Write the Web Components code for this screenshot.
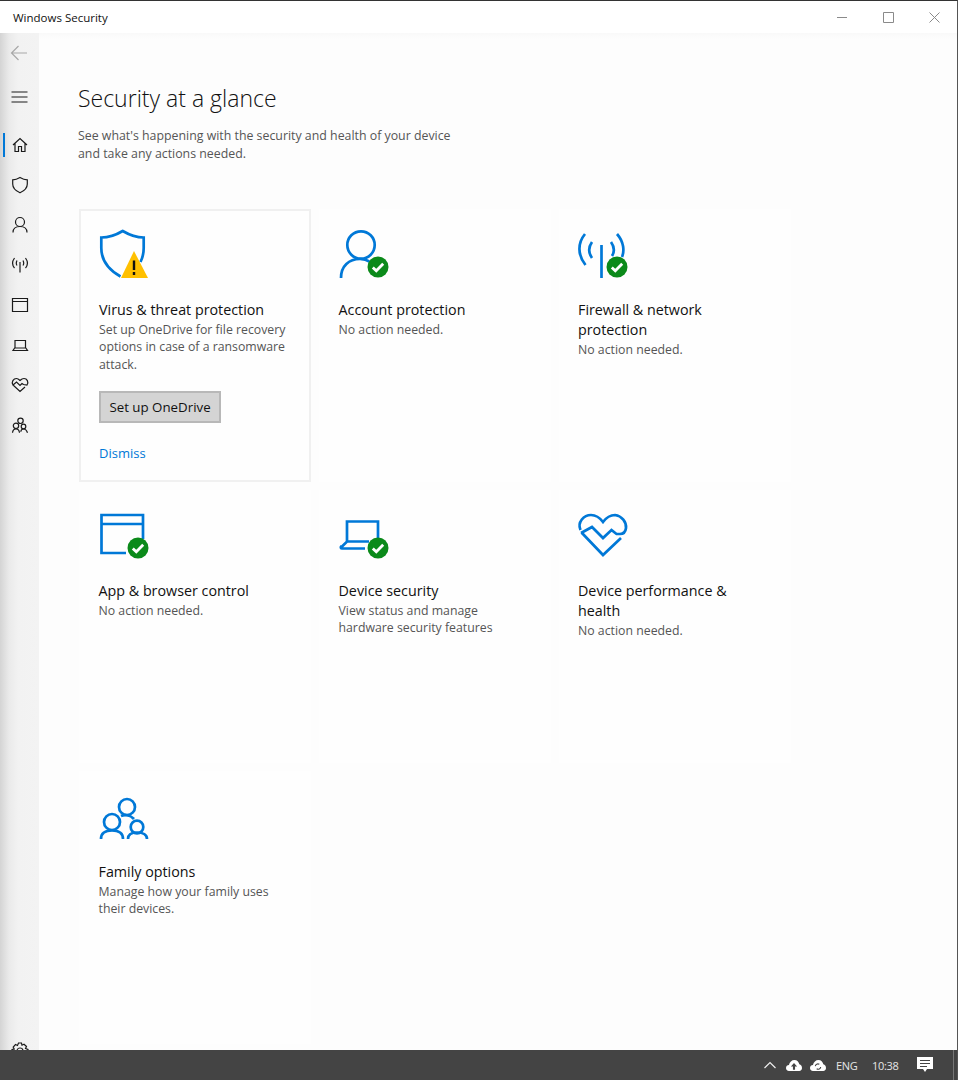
<!DOCTYPE html>
<html>
<head>
<meta charset="utf-8">
<title>Windows Security</title>
<style>
html, body { margin: 0; padding: 0; height: 100%; background: #fff; }
body { font-family: "Open Sans", "Liberation Sans", sans-serif; overflow: hidden; }
</style>
</head>
<body>
<sec-app>
    <sec-titlebar slot="top">Windows Security</sec-titlebar>
    <sec-nav slot="nav"></sec-nav>
    <sec-page heading="Security at a glance">
        <span slot="intro">See what's happening with the security and health of your device<br>and take any actions needed.</span>
        <sec-card icon="shield" alert>
            <span slot="heading">Virus &amp; threat protection</span>
            Set up OneDrive for file recovery options in case of a ransomware attack.
            <sec-button slot="actions">Set up OneDrive</sec-button>
            <sec-link slot="actions">Dismiss</sec-link>
        </sec-card>
        <sec-card icon="account" ok>
            <span slot="heading">Account protection</span>
            No action needed.
        </sec-card>
        <sec-card icon="wifi" ok>
            <span slot="heading">Firewall &amp; network protection</span>
            No action needed.
        </sec-card>
        <sec-card icon="browser" ok>
            <span slot="heading">App &amp; browser control</span>
            No action needed.
        </sec-card>
        <sec-card icon="laptop" ok>
            <span slot="heading">Device security</span>
            View status and manage hardware security features
        </sec-card>
        <sec-card icon="heart">
            <span slot="heading">Device performance &amp; health</span>
            No action needed.
        </sec-card>
        <sec-card icon="family">
            <span slot="heading">Family options</span>
            Manage how your family uses their devices.
        </sec-card>
    </sec-page>
    <sec-taskbar slot="bottom"></sec-taskbar>
</sec-app>

<script>
// big card icons, 50 box, origin is the top left of the icon slot
const CARD_ICONS = {
    shield: `<path d="M21.5 47.5C10 41 2.3 31 2.3 19V8.5C9.5 8.5 16.5 6.3 23.7 2C31 6.3 38 8.5 44.7 8.5V19C44.7 25 43.5 29 41.5 33"/>
             <path d="M35 22L49 49H22Z" fill="#ffc000" stroke="none"/>
             <path d="M35 31.500V41M35 43V46" stroke="#111" stroke-width="2.400"/>`,
    account: `<circle cx="22" cy="16" r="13.700"/><path d="M2 49C2 37 10 30 21 30C25 30 28 31 31 33"/>`,
    wifi: `<path d="M23.500 16V49"/>
           <path d="M7 5C-0.500 14 -0.500 26 7.500 36M39 5C46 13 46.500 22 44 28"/>
           <path d="M14 13C10.500 18 10.500 24 14 29M33 13C36.500 18 36.500 23 34 27"/>`,
    browser: `<path d="M44 29V5H2.500V43H27M2.500 14H44"/>`,
    laptop: `<path d="M8 31V11.500H39V29M1.500 38L8 31.500H30M26 38.500H3C2 38.500 1 37.500 2.500 36"/>`,
    heart: `<path d="M2.500 20C-1 12 6 5 13 5C18 5 22 8 25 12C28 8 32 5 37 5C44 6 48.500 12 48 18C47.500 22 45 24 42 24H38.500L33.500 20L25 28L14 17L3 23"/>
            <path d="M3.500 22.500L25 45L43 28"/>`,
    family: `<circle cx="28" cy="16" r="8"/><circle cx="13" cy="31" r="8"/><circle cx="38" cy="36" r="6.300"/>
             <path d="M2 48C2 42 6 39.500 13 39.500C20 39.500 24 42 24 48M29 48C29 44 32 41.500 38 41.500C44 41.500 48 44 48 48M22 25C25 23.500 31 23.500 35 28"/>`
}

// small rail icons on a 20 box
const NAV_ICONS = {
    home: `<path d="M3 10L10 3.500L17 10M5 8.500V16.500H8.500V11.500H11.500V16.500H15V8.500"/>`,
    shield: `<path d="M10 2.500C7.500 4 5 4.800 2.700 4.800V9C2.700 13 5.500 15.800 10 17.800C14.500 15.800 17.300 13 17.300 9V4.800C15 4.800 12.500 4 10 2.500Z"/>`,
    person: `<circle cx="10" cy="7" r="4.500"/><path d="M3 17.500C3 13.500 6 11.500 10 11.500C14 11.500 17 13.500 17 17.500"/>`,
    wifi: `<path d="M10 7V17.500M4.500 3C2 6.500 2 10 4.500 13M15.500 3C18 6.500 18 10 15.500 13M7 5.500C6 7.500 6 9 7 10.500M13 5.500C14 7.500 14 9 13 10.500"/>`,
    browser: `<path d="M2.500 3.500H17.500V16.500H2.500ZM2.500 6.500H17.500"/>`,
    laptop: `<path d="M5 5.500H15.500V13H5ZM5 12.500L3 15.500H17.500L15.500 12.500"/>`,
    heart: `<path d="M3 10C1 7 3.500 3.500 6.500 3.500C8 3.500 9 4.500 10 5.500C11 4.500 12.500 3.500 14 3.500C17 3.500 19 7 17 10L13.500 9.500L12 8.500L10 10.500L6.500 7L3 10L10 16.500L15 12"/>`,
    family: `<circle cx="10.500" cy="5.800" r="2.700"/><circle cx="6" cy="10.800" r="2.700"/><circle cx="13.500" cy="11.500" r="2.300"/>
             <path d="M2.500 17.800C2.800 15 4 13.800 6 13.800C8 13.800 9.200 15 9.500 17.800M10.800 16.800C11 15 12 14 13.500 14C15.500 14 16.700 15.500 17.500 17.800"/>`,
    gear: `<circle cx="10" cy="10" r="3"/><path d="M8.500 2H11.500L12 4.200L14 3.300L16.500 5.500L15.500 7.500L18 8.500V11.500L15.800 12L16.800 14L14.500 16.500L12.500 15.500L11.500 18H8.500L8 15.800L6 16.800L3.500 14.500L4.500 12.500L2 11.500V8.500L4.200 8L3.200 6L5.500 3.500L7.500 4.500Z"/>`
}

class SecApp extends HTMLElement {
    constructor() {
        super()
        this.attachShadow({ mode: 'open' })
        this.shadowRoot.innerHTML = `<style>
            :host { display: flex; flex-direction: column; height: 1080px; box-sizing: border-box; border-top: 1px solid #333; border-right: 1px solid #555; }
            section { flex: 1; display: flex; min-height: 0; }
        </style>
        <slot name="top"></slot>
        <section><slot name="nav"></slot><slot></slot></section>
        <slot name="bottom"></slot>`
    }
}

class SecTitlebar extends HTMLElement {
    constructor() {
        super()
        this.attachShadow({ mode: 'open' })
        this.shadowRoot.innerHTML = `<style>
            :host { display: flex; align-items: center; height: 32px; background: #fff; color: #111; font-size: 11.5px; padding-left: 13px; }
            .title { flex: 1; }
            svg { width: 46px; height: 32px; fill: none; stroke: #8a8a8a; stroke-width: 1; display: block; }
        </style>
        <div class="title"><slot></slot></div>
        <svg viewBox="0 0 46 32"><path d="M18 16.500H28"/></svg>
        <svg viewBox="0 0 46 32"><path d="M18.500 11.500H28.500V21.500H18.500Z"/></svg>
        <svg viewBox="0 0 46 32"><path d="M18.500 11.500L28.500 21.500M28.500 11.500L18.500 21.500"/></svg>`
    }
}

class SecNav extends HTMLElement {
    constructor() {
        super()
        this.attachShadow({ mode: 'open' })
        const row = (name) => `<div class="row${name === 'home' ? ' active' : ''}"><svg viewBox="0 0 20 20">${NAV_ICONS[name]}</svg></div>`
        this.shadowRoot.innerHTML = `<style>
            :host { display: flex; flex-direction: column; flex: none; width: 39px; overflow: hidden; background: linear-gradient(90deg, #d4d4d4 0, #eaeaea 9px, #f2f2f2 18px, #f3f3f3 100%); }
            .row { flex: none; height: 40px; display: flex; align-items: center; justify-content: center; position: relative; }
            .row svg { width: 20px; height: 20px; fill: none; stroke: #1a1a1a; stroke-width: 1.200; }
            .back svg { stroke: #a8a8a8; }
            .menu { margin: 4px 0 8px; }
            .active::before { content: ""; position: absolute; left: 3px; top: 8px; width: 2px; height: 24px; background: #0078d7; }
            .gear { margin-top: auto; margin-bottom: -21px; }
        </style>
        <div class="row back"><svg viewBox="0 0 20 20"><path d="M17 10H1.500M8.500 3L1.500 10L8.500 17"/></svg></div>
        <div class="row menu"><svg viewBox="0 0 20 20"><path d="M1.500 5H17.500M1.500 10H17.500M1.500 15H17.500"/></svg></div>
        ${['home', 'shield', 'person', 'wifi', 'browser', 'laptop', 'heart', 'family'].map(row).join('')}
        <div class="row gear"><svg viewBox="0 0 20 20">${NAV_ICONS.gear}</svg></div>`
    }
}

class SecPage extends HTMLElement {
    constructor() {
        super()
        this.attachShadow({ mode: 'open' })
        this.shadowRoot.innerHTML = `<style>
            :host { display: block; flex: 1; min-width: 0; overflow: hidden; background: linear-gradient(180deg, #f9f9f9 0, #fdfdfd 6px); padding: 49px 0 0 39px; }
            h1 { margin: 0; font-size: 23px; line-height: 32px; font-weight: 300; color: #111; }
            p { margin: 13px 0 46px; font-size: 12.350px; line-height: 18px; color: #555; }
            .grid { display: grid; grid-template-columns: 232px 231.500px 232px; grid-auto-rows: 273px; gap: 8px; margin-left: 1px; }
        </style>
        <h1>${this.getAttribute('heading')}</h1>
        <p><slot name="intro"></slot></p>
        <div class="grid"><slot></slot></div>`
    }
}

class SecCard extends HTMLElement {
    constructor() {
        super()
        this.attachShadow({ mode: 'open' })
        const ok = this.hasAttribute('ok')
        const badge = ok ? `<svg class="badge" viewBox="0 0 22 22"><circle cx="11" cy="11" r="10.500" fill="#0b8a1a"/><path d="M5.800 11.500L9.300 14.800L16.200 7.800" fill="none" stroke="#fff" stroke-width="2.800"/></svg>` : ''
        this.shadowRoot.innerHTML = `<style>
            :host { display: block; box-sizing: border-box; padding: 20px 22px 0 19.500px; background: #fefefe; }
            :host([alert]) { box-shadow: inset 0 0 0 2px #f0f0f0; padding-left: 20px; }
            .icon { position: relative; width: 50px; height: 50px; margin-bottom: 21px; }
            .icon > svg:first-child { display: block; width: 50px; height: 50px; overflow: visible; fill: none; stroke: #0078d7; stroke-width: 2.700; }
            .badge { position: absolute; left: 28px; top: 27px; width: 22px; height: 22px; }
            .heading { font-size: 14.300px; line-height: 20px; color: #111; }
            .text { margin-top: 0.500px; font-size: 12.300px; line-height: 17.500px; color: #555; }
        </style>
        <div class="icon"><svg viewBox="0 0 50 50">${CARD_ICONS[this.getAttribute('icon')]}</svg>${badge}</div>
        <div class="heading"><slot name="heading"></slot></div>
        <div class="text"><slot></slot></div>
        <slot name="actions"></slot>`
    }
}

class SecButton extends HTMLElement {
    constructor() {
        super()
        this.attachShadow({ mode: 'open' })
        this.shadowRoot.innerHTML = `<style>
            :host { display: flex; align-items: center; justify-content: center; box-sizing: border-box; width: 122px; height: 32px; margin-top: 18px; background: #d4d4d4; border: 2px solid #b8b8b8; color: #111; font-size: 13.300px; }
        </style><slot></slot>`
    }
}

class SecLink extends HTMLElement {
    constructor() {
        super()
        this.attachShadow({ mode: 'open' })
        this.shadowRoot.innerHTML = `<style>
            :host { display: block; margin-top: 20.500px; color: #0078d7; font-size: 13px; line-height: 18px; }
        </style><slot></slot>`
    }
}

class SecTaskbar extends HTMLElement {
    constructor() {
        super()
        this.attachShadow({ mode: 'open' })
        this.shadowRoot.innerHTML = `<style>
            :host { display: flex; flex: none; align-items: center; justify-content: flex-end; height: 30px; background: #444; color: #e6e6e6; font-size: 11px; padding-right: 3px; }
            svg { display: block; flex: none; }
            .chev { width: 14px; height: 14px; margin-right: 9px; fill: none; stroke: #eee; stroke-width: 1.200; }
            .cloud { width: 16px; height: 12.500px; margin-right: 8px; fill: #fff; }
            .eng { width: 22px; margin: 0 14px 0 2px; white-space: nowrap; letter-spacing: -0.300px; }
            .time { width: 27px; margin-right: 17px; white-space: nowrap; letter-spacing: -0.300px; }
            .note { width: 18px; height: 18px; fill: #fff; margin-right: 19px; }
            .edge { width: 1px; height: 30px; background: #777; }
        </style>
        <svg class="chev" viewBox="0 0 14 14"><path d="M1.500 10L7 4.500L12.500 10"/></svg>
        <svg class="cloud" viewBox="0 0 18 14"><path d="M4 13.500C1.500 13.500 0 12 0 10C0 8 1.500 6.800 3.300 6.800C4 3.300 6.500 1 9.500 1C12.500 1 14.500 3 15 6C16.800 6.300 18 8 18 10C18 12 16.500 13.500 14.500 13.500Z"/><path d="M9 4.500L5.500 8.300H7.800V12H10.200V8.300H12.500Z" fill="#444"/></svg>
        <svg class="cloud" viewBox="0 0 18 14"><path d="M4 13.500C1.500 13.500 0 12 0 10C0 8 1.500 6.800 3.300 6.800C4 3.300 6.500 1 9.500 1C12.500 1 14.500 3 15 6C16.800 6.300 18 8 18 10C18 12 16.500 13.500 14.500 13.500Z"/><path d="M6 8C6.200 6 8.500 4.800 10.500 6M12 9C11.800 11 9.500 12.200 7.500 11" fill="none" stroke="#444" stroke-width="1.300"/></svg>
        <span class="eng">ENG</span>
        <span class="time">10:38</span>
        <svg class="note" viewBox="0 0 18 18"><path d="M1 1H17V13H11L9 16L7 13H1Z"/><path d="M4 4.500H14M4 7.500H14M4 10.500H11" stroke="#444" stroke-width="1"/></svg>
        <div class="edge"></div>`
    }
}

customElements.define('sec-app', SecApp)
customElements.define('sec-titlebar', SecTitlebar)
customElements.define('sec-nav', SecNav)
customElements.define('sec-page', SecPage)
customElements.define('sec-card', SecCard)
customElements.define('sec-button', SecButton)
customElements.define('sec-link', SecLink)
customElements.define('sec-taskbar', SecTaskbar)
</script>
</body>
</html>
